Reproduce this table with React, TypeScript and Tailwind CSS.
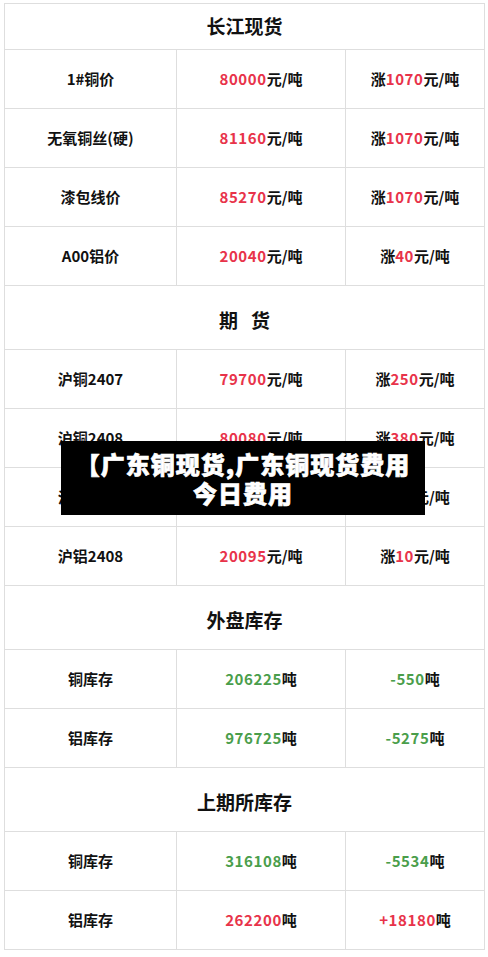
import React from "react";

type Cell = { text: string; color?: "red" | "green"; pre?: string; post?: string };
type Row = [string, Cell, Cell];

const spot: Row[] = [
  ["1#铜价", { text: "80000", color: "red", post: "元/吨" }, { pre: "涨", text: "1070", color: "red", post: "元/吨" }],
  ["无氧铜丝(硬)", { text: "81160", color: "red", post: "元/吨" }, { pre: "涨", text: "1070", color: "red", post: "元/吨" }],
  ["漆包线价", { text: "85270", color: "red", post: "元/吨" }, { pre: "涨", text: "1070", color: "red", post: "元/吨" }],
  ["A00铝价", { text: "20040", color: "red", post: "元/吨" }, { pre: "涨", text: "40", color: "red", post: "元/吨" }],
];

const futures: Row[] = [
  ["沪铜2407", { text: "79700", color: "red", post: "元/吨" }, { pre: "涨", text: "250", color: "red", post: "元/吨" }],
  ["沪铜2408", { text: "80080", color: "red", post: "元/吨" }, { pre: "涨", text: "380", color: "red", post: "元/吨" }],
  ["沪铝2407", { text: "20060", color: "red", post: "元/吨" }, { pre: "涨", text: "15", color: "red", post: "元/吨" }],
  ["沪铝2408", { text: "20095", color: "red", post: "元/吨" }, { pre: "涨", text: "10", color: "red", post: "元/吨" }],
];

const lme: Row[] = [
  ["铜库存", { text: "206225", color: "green", post: "吨" }, { text: "-550", color: "green", post: "吨" }],
  ["铝库存", { text: "976725", color: "green", post: "吨" }, { text: "-5275", color: "green", post: "吨" }],
];

const shfe: Row[] = [
  ["铜库存", { text: "316108", color: "green", post: "吨" }, { text: "-5534", color: "green", post: "吨" }],
  ["铝库存", { text: "262200", color: "red", post: "吨" }, { text: "+18180", color: "red", post: "吨" }],
];

const Value = ({ c }: { c: Cell }) => (
  <>
    {c.pre}
    <span className={`tracking-[0.6px] ${c.color === "red" ? "text-[#e8334a]" : "text-[#4a9e4b]"}`}>{c.text}</span>
    {c.post}
  </>
);

const td = "border border-[#dedede] text-center align-middle";

const DataRows = ({ rows }: { rows: Row[] }) => (
  <>
    {rows.map((r, i) => (
      <tr key={i} className="h-[59px]">
        <td className={td}>{r[0]}</td>
        <td className={td}>
          <Value c={r[1]} />
        </td>
        <td className={td}>
          <Value c={r[2]} />
        </td>
      </tr>
    ))}
  </>
);

const Header = ({ children, tall = true }: { children: React.ReactNode; tall?: boolean }) => (
  <tr className={tall ? "h-[64px]" : "h-[46px]"}>
    <td colSpan={3} className={`${td} text-[19px] ${tall ? "pt-[6px]" : ""}`}>
      {children}
    </td>
  </tr>
);

export default function App() {
  return (
    <div
      className="relative w-[488px] h-[957px] bg-white pt-[3px] pl-[4px] text-[#111] font-bold"
      style={{ fontFamily: '"Noto Sans CJK SC", "Noto Sans", sans-serif' }}
    >
      <table className="w-[480px] border-collapse table-fixed text-[15px]">
        <colgroup>
          <col className="w-[172px]" />
          <col className="w-[169px]" />
          <col className="w-[139px]" />
        </colgroup>
        <tbody>
          <Header tall={false}>长江现货</Header>
          <DataRows rows={spot} />
          <Header>
            期<span className="inline-block w-[13px]" />货
          </Header>
          <DataRows rows={futures} />
          <Header>外盘库存</Header>
          <DataRows rows={lme} />
          <Header>上期所库存</Header>
          <DataRows rows={shfe} />
        </tbody>
      </table>

      {/* title banner over the table */}
      <div className="absolute left-[61px] top-[441px] w-[364px] h-[74px] bg-black flex flex-col items-center justify-center text-white text-[24px] leading-[29px] font-black tracking-[1px] [-webkit-text-stroke:0.7px_white]">
        <div>【广东铜现货,广东铜现货费用</div>
        <div>今日费用</div>
      </div>
    </div>
  );
}
